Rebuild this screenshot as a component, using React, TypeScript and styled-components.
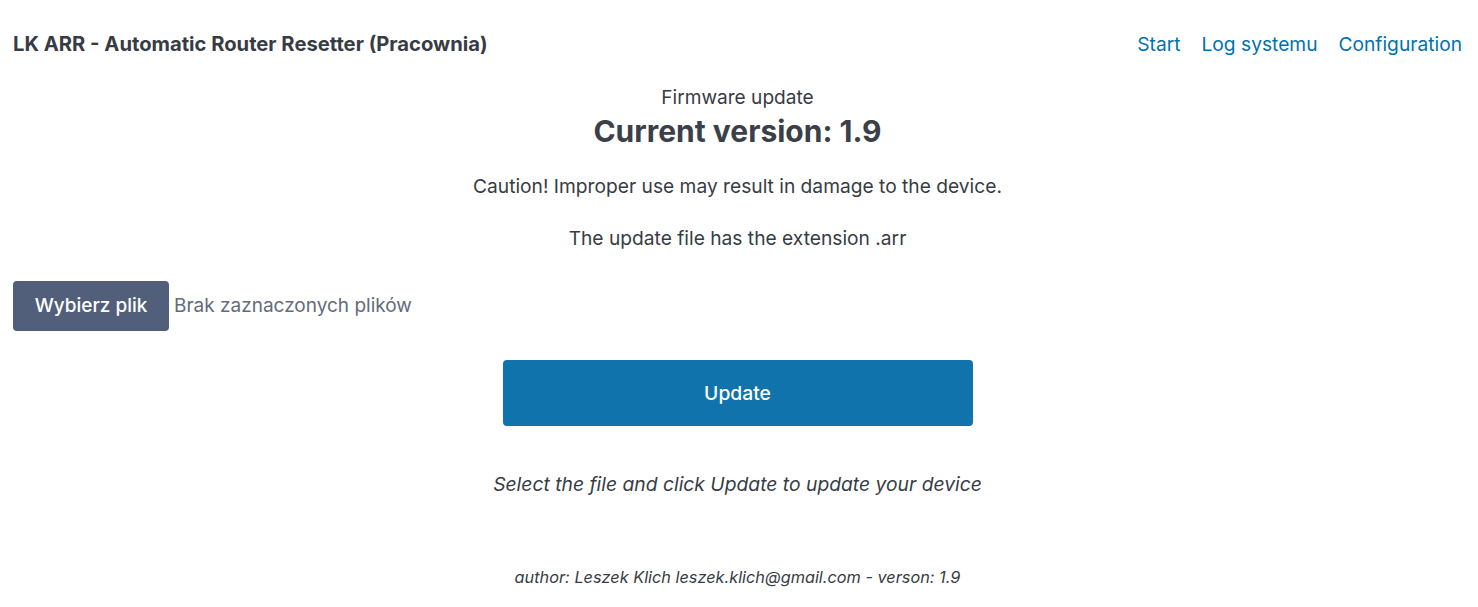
import React from "react";
import styled, { createGlobalStyle } from "styled-components";

const Global = createGlobalStyle`
  html, body { margin: 0; padding: 0; background: #ffffff; }
  body {
    font-family: Inter, "Noto Sans", "Liberation Sans", sans-serif;
    color: #373c44;
    font-size: 20px;
    line-height: 1.5;
  }
  * { box-sizing: border-box; }
`;

const Page = styled.div`
  width: 1478px;
  padding: 0 16px 0 13px;
`;

const Header = styled.nav`
  display: flex;
  justify-content: space-between;
  align-items: center;
  height: 88px;
`;

const Brand = styled.strong`
  font-size: 20.2px;
  font-weight: 700;
  color: #373c44;
`;

const NavList = styled.ul`
  display: flex;
  gap: 21px;
  list-style: none;
  margin: 0;
  padding: 0;
`;

const NavLink = styled.a`
  color: #0172ad;
  text-decoration: none;
  font-size: 19.2px;
`;

const Main = styled.main`
  display: flex;
  flex-direction: column;
  align-items: stretch;
`;

const Centered = styled.div`
  display: flex;
  flex-direction: column;
  align-items: center;
  text-align: center;
`;

const Subtitle = styled.p`
  margin: -1px 0 0;
  font-size: 19.1px;
  line-height: 20px;
`;

const Heading = styled.h3`
  margin: 0;
  font-size: 30px;
  line-height: 48px;
  font-weight: 700;
  color: #3a3f49;
`;

const Para = styled.p<{ $top?: number }>`
  margin: ${(p) => p.$top ?? 0}px 0 0;
  font-size: 19.2px;
  line-height: 28px;
`;

const FileRow = styled.div`
  display: flex;
  align-items: center;
  margin-top: 29px;
  height: 50px;
`;

const FileButton = styled.span`
  display: inline-flex;
  align-items: center;
  justify-content: center;
  width: 156px;
  height: 50px;
  border-radius: 4px;
  background: #525f7a;
  color: #ffffff;
  font-size: 19px;
  font-weight: 500;
`;

const FileStatus = styled.span`
  margin-left: 5px;
  color: #646b79;
  font-size: 19px;
`;

const UpdateButton = styled.button`
  margin-top: 29px;
  width: 470px;
  height: 66px;
  border: none;
  border-radius: 4px;
  background: #1173ab;
  color: #ffffff;
  font-family: inherit;
  font-size: 19.3px;
  font-weight: 500;
`;

const Hint = styled.p`
  margin: 44px 0 0;
  font-size: 19.3px;
  font-style: italic;
  line-height: 28px;
`;

const Footer = styled.footer`
  margin-top: 67px;
  text-align: center;
  font-size: 16.3px;
  font-style: italic;
  line-height: 24px;
`;

export default function App() {
  return (
    <>
      <Global />
      <Page>
        <Header>
          <Brand>LK ARR - Automatic Router Resetter (Pracownia)</Brand>
          <NavList>
            <li><NavLink href="#">Start</NavLink></li>
            <li><NavLink href="#">Log systemu</NavLink></li>
            <li><NavLink href="#">Configuration</NavLink></li>
          </NavList>
        </Header>
        <Main>
          <Centered>
            <Subtitle>Firmware update</Subtitle>
            <Heading>Current version: 1.9</Heading>
            <Para $top={17}>Caution! Improper use may result in damage to the device.</Para>
            <Para $top={24}>The update file has the extension .arr</Para>
          </Centered>
          <FileRow>
            <FileButton>Wybierz plik</FileButton>
            <FileStatus>Brak zaznaczonych plików</FileStatus>
          </FileRow>
          <Centered>
            <UpdateButton>Update</UpdateButton>
            <Hint>Select the file and click Update to update your device</Hint>
          </Centered>
        </Main>
        <Footer>author: Leszek Klich leszek.klich@gmail.com - verson: 1.9</Footer>
      </Page>
    </>
  );
}
